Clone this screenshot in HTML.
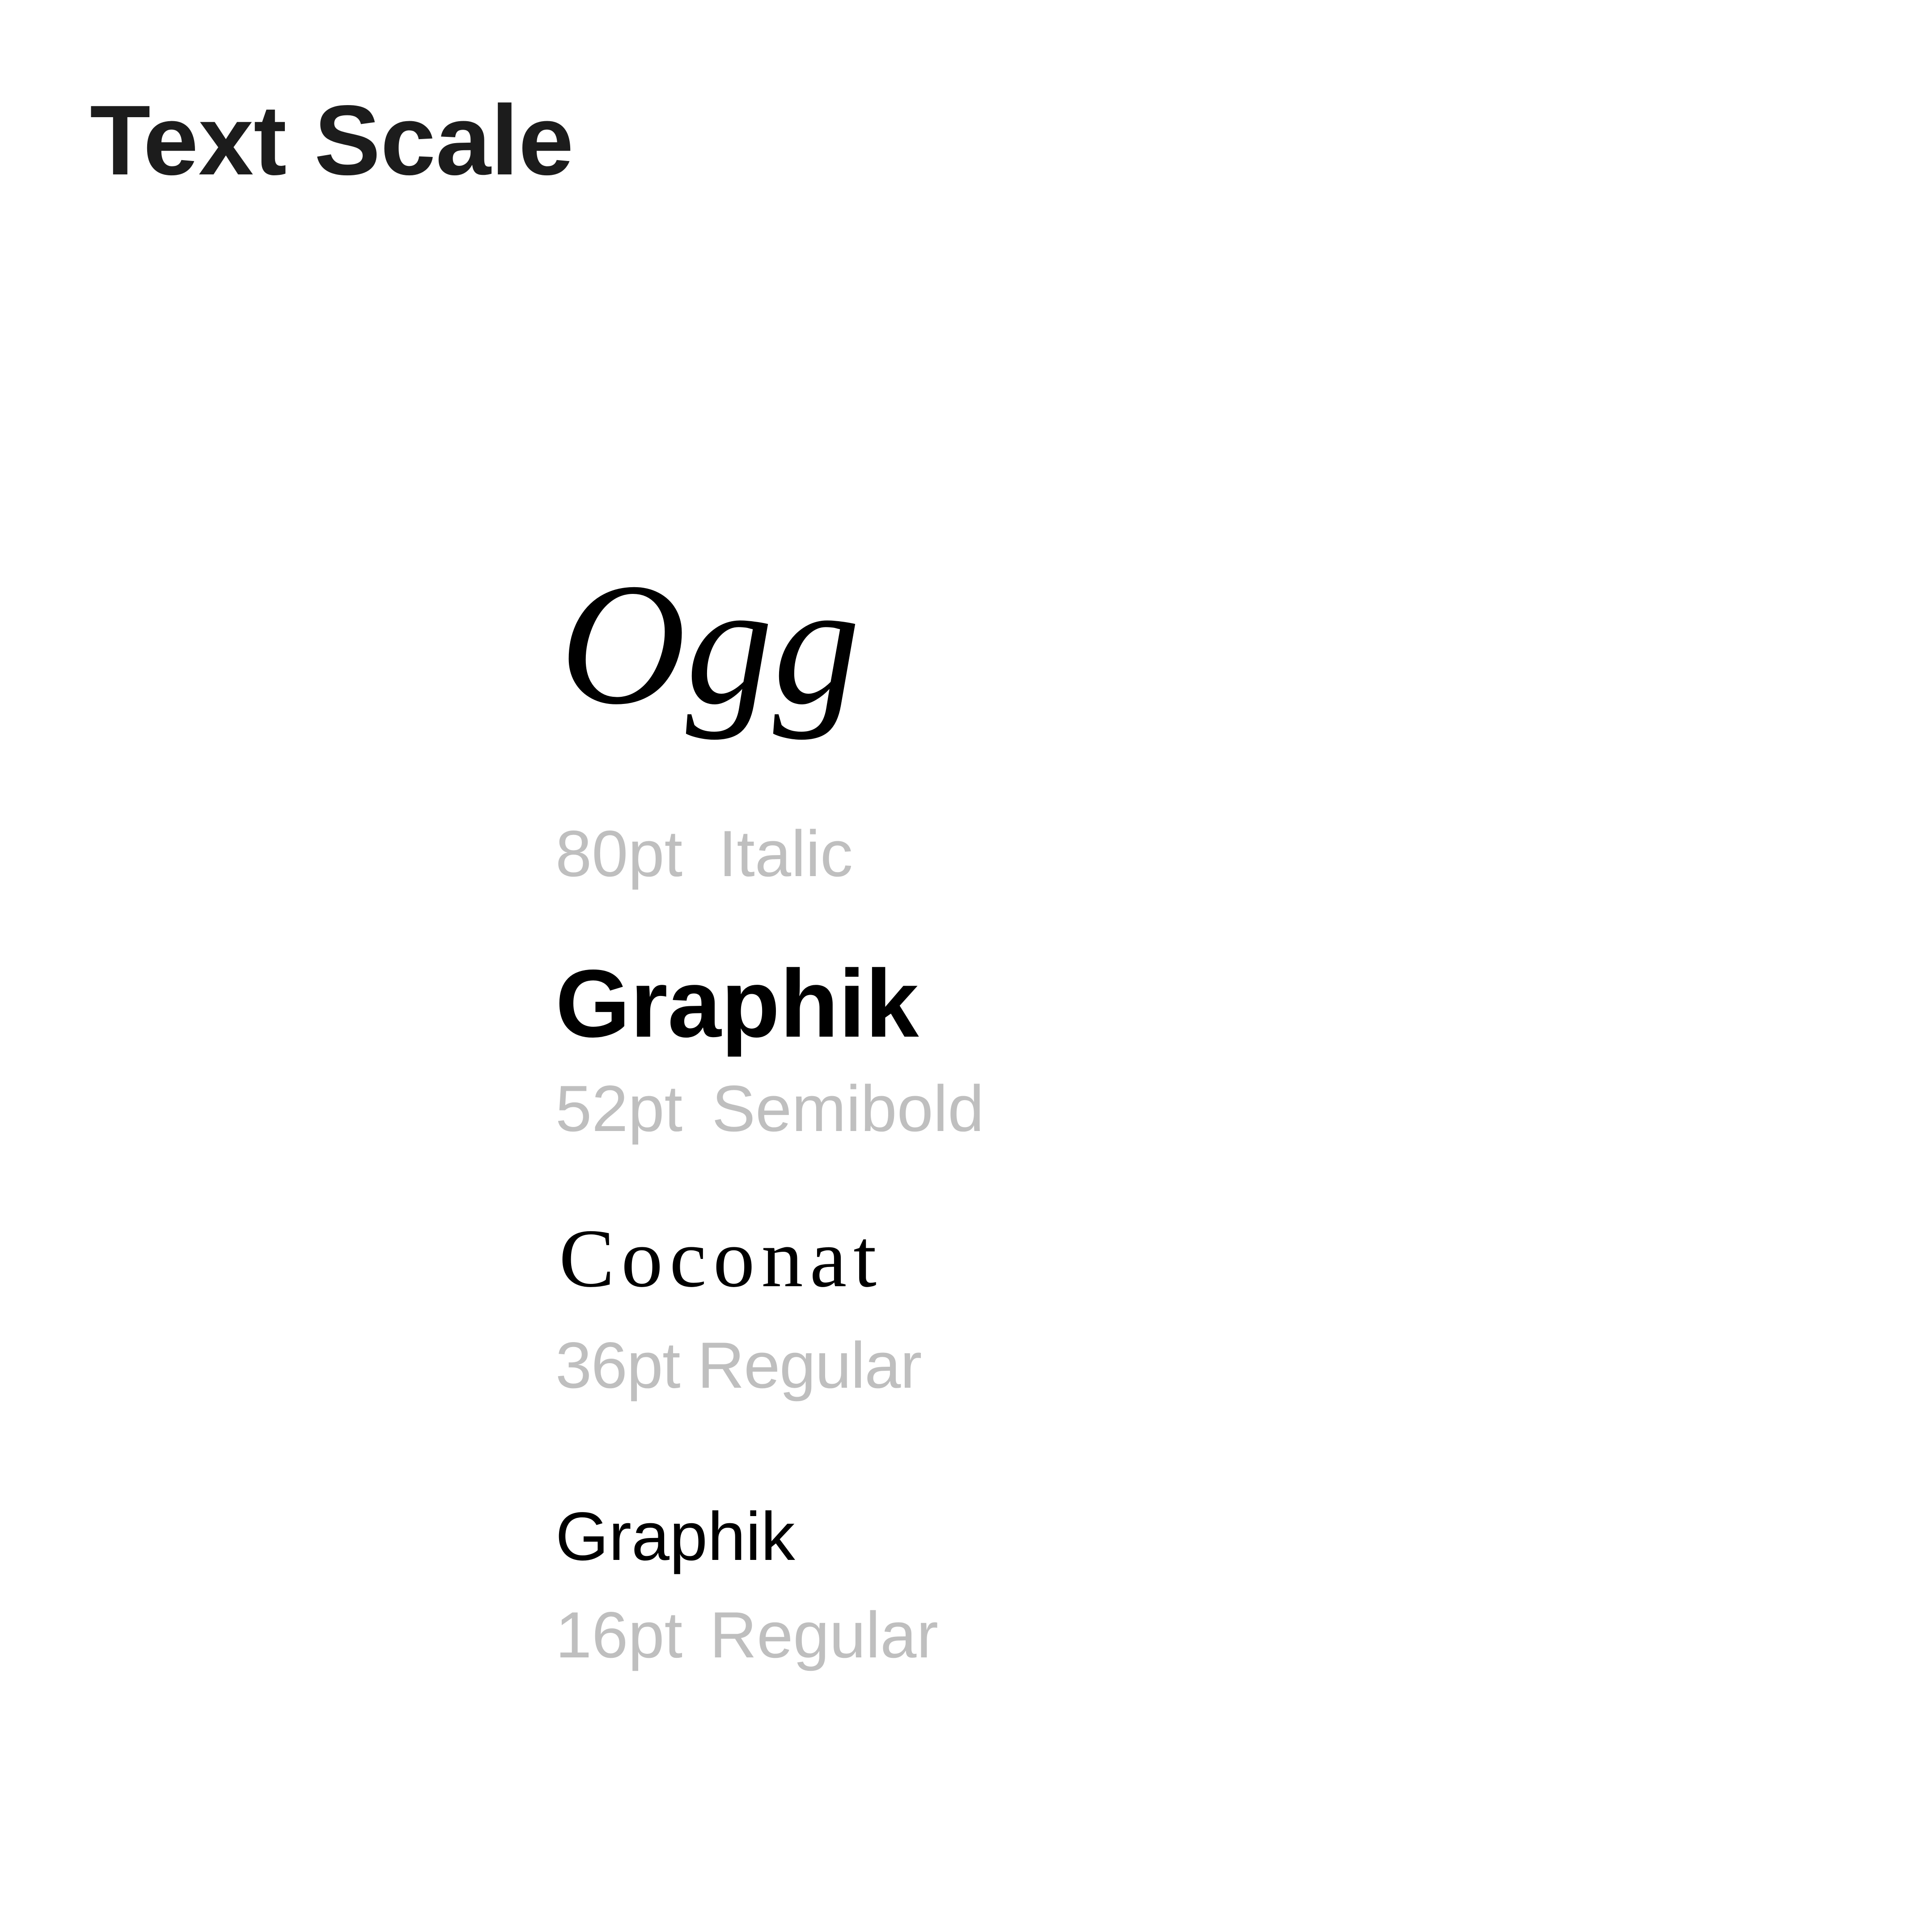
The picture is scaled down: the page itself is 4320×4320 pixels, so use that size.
<!DOCTYPE html>
<html><head><meta charset="utf-8"><style>
html,body{margin:0;padding:0;background:#fff;}
body{width:4320px;height:4320px;position:relative;overflow:hidden;}
.t{position:absolute;white-space:nowrap;line-height:1;}
.s{font-family:"Liberation Sans",sans-serif;}
.lab{font-family:"Liberation Sans",sans-serif;font-size:146px;color:#bfbfbf;left:1242px;}
</style></head><body>
<div class="t s" style="left:201px;top:203px;font-size:222px;font-weight:bold;color:#1c1c1c;">Text Scale</div>
<div class="t" style="left:1252px;top:1245px;font-size:390px;font-family:'Liberation Serif',serif;font-style:italic;color:#000;">Ogg</div>
<div class="t lab" style="top:1836px;word-spacing:40px;">80pt Italic</div>
<div class="t s" style="left:1242px;top:2136px;font-size:215px;font-weight:bold;color:#000;">Graphik</div>
<div class="t lab" style="top:2406px;word-spacing:25px;">52pt Semibold</div>
<div class="t" style="left:1250px;top:2721px;font-size:186px;font-family:'Liberation Serif',serif;letter-spacing:15px;color:#000;">Coconat</div>
<div class="t lab" style="top:2980px;letter-spacing:-1.5px;">36pt Regular</div>
<div class="t s" style="left:1242px;top:3359px;font-size:153px;color:#000;">Graphik</div>
<div class="t lab" style="top:3583px;word-spacing:20px;">16pt Regular</div>
</body></html>
